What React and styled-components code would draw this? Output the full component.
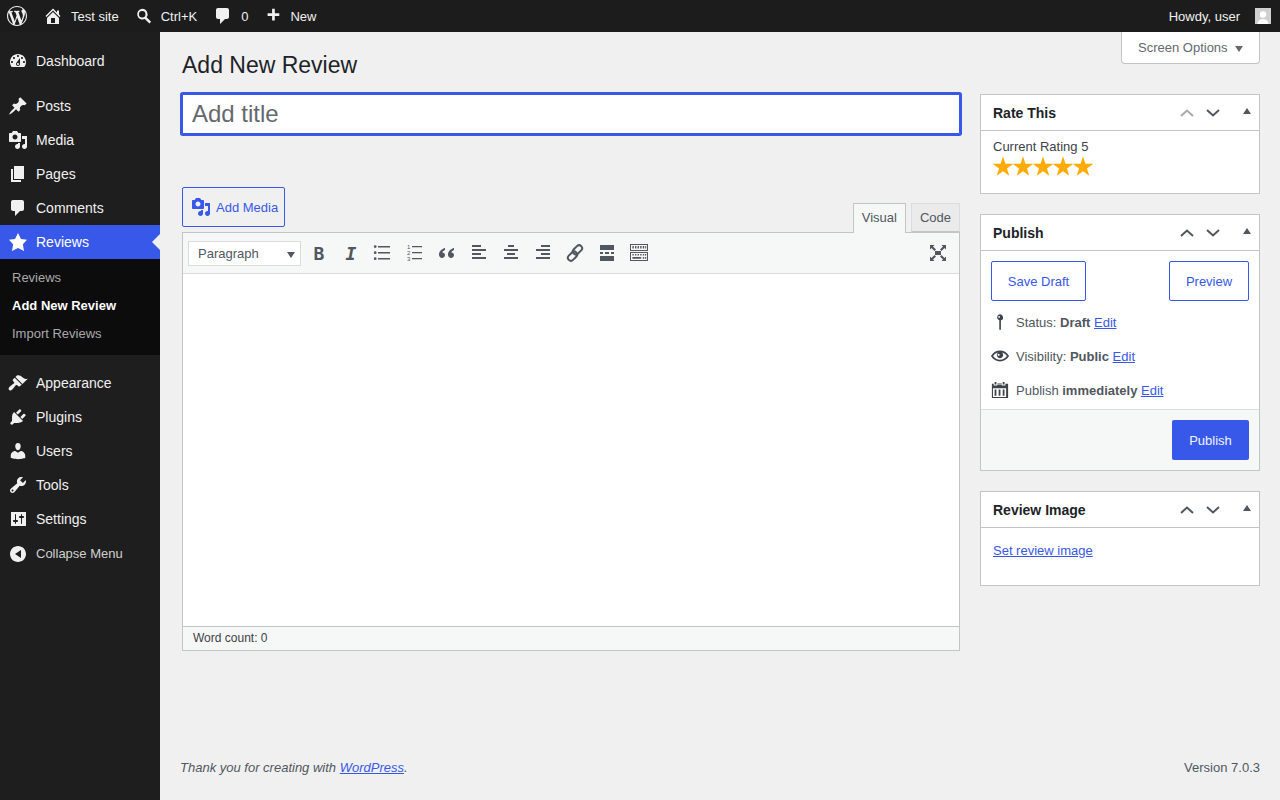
import styled, { createGlobalStyle } from 'styled-components';

const blue = '#3858e9';
const sans = '"Liberation Sans", Arial, sans-serif';

const GlobalStyle = createGlobalStyle`
    html, body {
        margin: 0;
        height: 800px;
        overflow: hidden;
        background: #f0f0f1;
        font-family: ${sans};
        font-size: 13px;
        color: #3c434a;
    }
    * { box-sizing: border-box; }
`

const paths = {
    wordpress: 'M20 10c0-5.51-4.49-10-10-10C4.48 0 0 4.49 0 10c0 5.52 4.48 10 10 10 5.51 0 10-4.48 10-10zM7.78 15.37L4.37 6.22c.55-.02 1.17-.08 1.17-.08.5-.06.44-1.13-.06-1.11 0 0-1.45.11-2.37.11-.18 0-.37 0-.58-.01C4.12 2.69 6.87 1.11 10 1.11c2.33 0 4.45.87 6.05 2.34-.68-.11-1.65.39-1.65 1.58 0 .74.45 1.36.9 2.1.35.61.55 1.36.55 2.46 0 1.49-1.4 5-1.4 5l-3.03-8.37c.54-.02.82-.17.82-.17.5-.05.44-1.25-.06-1.22 0 0-1.44.12-2.38.12-.87 0-2.33-.12-2.33-.12-.5-.03-.56 1.2-.06 1.22l.92.08 1.26 3.41zM17.41 10c.24-.64.74-1.87.43-4.25.7 1.29 1.05 2.71 1.05 4.25 0 3.29-1.73 6.24-4.4 7.78.97-2.59 1.94-5.2 2.92-7.78zM6.1 18.09C3.12 16.65 1.11 13.53 1.11 10c0-1.3.23-2.48.72-3.59C3.25 10.3 4.67 14.2 6.1 18.09zm4.03-6.63l2.58 6.98c-.86.29-1.76.45-2.71.45-.79 0-1.57-.11-2.29-.33.81-2.38 1.62-4.74 2.42-7.1z',
    home: 'M16 8.5l1.53 1.53-1.06 1.06L10 4.62l-6.47 6.47-1.06-1.06L10 2.5l4 4v-2h2v4zm-6-2.46l6 5.99V18H4v-5.97zM12 17v-5H8v5h4z',
    search: 'M8 2a6 6 0 0 1 4.9 9.46l5 5-1.9 2-5.1-5A6 6 0 1 1 8 2zm0 2.4a3.6 3.6 0 1 0 0 7.2 3.6 3.6 0 0 0 0-7.2z',
    comment: 'M5 2h9c1.1 0 2 .9 2 2v7c0 1.1-.9 2-2 2h-2l-5 5v-5H5c-1.1 0-2-.9-2-2V4c0-1.1.9-2 2-2z',
    plus: 'M17 7v3h-5v5H9v-5H4V7h5V2h3v5h5z',
    dashboard: 'M3.76 16h12.48c1.1-1.37 1.76-3.11 1.76-5 0-4.42-3.58-8-8-8s-8 3.58-8 8c0 1.89.66 3.63 1.76 5zM10 4c.55 0 1 .45 1 1s-.45 1-1 1-1-.45-1-1 .45-1 1-1zM6 6c.55 0 1 .45 1 1s-.45 1-1 1-1-.45-1-1 .45-1 1-1zm8 0c.55 0 1 .45 1 1s-.45 1-1 1-1-.45-1-1 .45-1 1-1zm-5.37 5.55L12 7v6c0 1.1-.9 2-2 2s-2-.9-2-2c0-.57.24-1.08.63-1.45zM4 10c.55 0 1 .45 1 1s-.45 1-1 1-1-.45-1-1 .45-1 1-1zm12 0c.55 0 1 .45 1 1s-.45 1-1 1-1-.45-1-1 .45-1 1-1zm-5 3c0-.55-.45-1-1-1s-1 .45-1 1 .45 1 1 1 1-.45 1-1z',
    pin: 'M10.44 3.02l1.82-1.82 6.36 6.35-1.83 1.82c-1.05-.68-2.48-.57-3.41.36l-.75.75c-.92.93-1.04 2.35-.35 3.41l-1.83 1.82-2.41-2.41-2.8 2.79c-.42.42-3.38 2.71-3.8 2.29s1.86-3.39 2.28-3.81l2.79-2.79L4.1 9.36l1.83-1.82c1.05.69 2.48.57 3.4-.36l.75-.75c.93-.92 1.05-2.35.36-3.41z',
    media: 'M13 11V4c0-.55-.45-1-1-1h-1.67L9 1H5L3.67 3H2c-.55 0-1 .45-1 1v7c0 .55.45 1 1 1h10c.55 0 1-.45 1-1zM7 4.5c1.38 0 2.5 1.12 2.5 2.5S8.38 9.5 7 9.5 4.5 8.38 4.5 7 5.62 4.5 7 4.5zM14 6h5v10.5c0 1.38-1.12 2.5-2.5 2.5S14 17.88 14 16.5s1.12-2.5 2.5-2.5c.17 0 .34.02.5.05V9h-3V6zm-4 8.05V13h2v3.5c0 1.38-1.12 2.5-2.5 2.5S7 17.88 7 16.5 8.12 14 9.5 14c.17 0 .34.02.5.05z',
    page: 'M6 15V2h10v13H6zm-1 1h8v2H3V5h2v11z',
    star: 'M10 1l3 6 6 .75-4.12 4.62L16 19l-6-3-6 3 1.13-6.63L1 7.75 7 7z',
    appearance: 'M14.48 11.06L7.41 3.99l1.5-1.5c.5-.56 2.3-.47 3.51.32 1.21.8 1.43 1.28 2.91 2.1 1.18.64 2.45 1.26 4.45.85zm-.71.71L6.7 4.7 4.93 6.47c-.39.39-.39 1.02 0 1.41l1.06 1.06c.39.39.39 1.03 0 1.42-.6.6-3.38 2.67-3.38 2.67-.35.26-.7.53-1.01.84-1.39 1.39-1.05 2.44-.61 2.88l.44.44c.44.44 1.5.78 2.89-.61.31-.31.58-.66.84-1.01 0 0 2.07-2.78 2.67-3.38.39-.39 1.03-.39 1.42 0l1.06 1.06c.39.39 1.02.39 1.41 0z',
    plugins: 'M13.11 4.36L9.87 7.6 8 5.73l3.24-3.24c.35-.34 1.05-.2 1.56.32.52.51.66 1.21.31 1.55zm-8 1.77l.91-1.12 9.01 9.01-1.19.84c-.71.71-2.63 1.16-3.82 1.16H6.14L4.9 17.26c-.59.59-1.54.59-2.12 0-.59-.58-.59-1.53 0-2.12l1.24-1.24v-3.88c0-1.13.4-3.19 1.09-3.89zm7.26 3.97l3.24-3.24c.34-.35 1.04-.21 1.55.31.52.51.66 1.21.31 1.55l-3.24 3.25z',
    users: 'M10 9.25c-2.27 0-2.73-3.44-2.73-3.44C7 4.02 7.82 2 9.97 2c2.16 0 2.98 2.02 2.71 3.81 0 0-.41 3.44-2.68 3.44zm0 2.57L12.72 10c2.39 0 4.52 2.33 4.52 4.53v2.49s-3.65 1.13-7.24 1.13c-3.65 0-7.24-1.13-7.24-1.13v-2.49c0-2.25 1.94-4.48 4.47-4.48z',
    tools: 'M16.68 9.77c-1.34 1.34-3.3 1.67-4.95.99l-5.41 6.52c-.99.99-2.59.99-3.58 0s-.99-2.59 0-3.57l6.52-5.42c-.68-1.65-.35-3.61.99-4.95 1.28-1.28 3.12-1.62 4.72-1.06l-2.89 2.89 2.82 2.82 2.86-2.87c.53 1.58.18 3.39-1.08 4.65zM3.81 16.21c.4.39 1.04.39 1.43 0 .4-.4.4-1.04 0-1.43-.39-.4-1.03-.4-1.43 0-.39.39-.39 1.03 0 1.43z',
    settings: 'M18 17V3H3v14h15zM8 11h1c.55 0 1 .45 1 1s-.45 1-1 1H8v1.5c0 .28-.22.5-.5.5s-.5-.22-.5-.5V13H6c-.55 0-1-.45-1-1s.45-1 1-1h1V5.5c0-.28.22-.5.5-.5s.5.22.5.5V11zm5-2h-1c-.55 0-1-.45-1-1s.45-1 1-1h1V5.5c0-.28.22-.5.5-.5s.5.22.5.5V7h1c.55 0 1 .45 1 1s-.45 1-1 1h-1v5.5c0 .28-.22.5-.5.5s-.5-.22-.5-.5V9z',
    collapse: 'M18 10c0-4.42-3.58-8-8-8s-8 3.58-8 8 3.58 8 8 8 8-3.58 8-8zM13 6v8l-6-4z',
    location: 'M10 1.5a3.4 3.4 0 0 1 1 6.65V18.5H9.2V8.15A3.4 3.4 0 0 1 10 1.5zM9 3.4a1 1 0 1 0 0 2 1 1 0 0 0 0-2z',
    eye: 'M19.7 9.4C17.7 6 14 3.9 10 3.9S2.3 6 .3 9.4L0 10l.3.6c2 3.4 5.7 5.5 9.7 5.5s7.7-2.1 9.7-5.5l.3-.6-.3-.6zM10 14.1c-3.1 0-6-1.6-7.7-4.1C3.6 8 5.7 6.6 8 6.1c-.9.6-1.5 1.7-1.5 2.9 0 1.9 1.6 3.5 3.5 3.5s3.5-1.6 3.5-3.5c0-1.2-.6-2.3-1.5-2.9 2.3.5 4.4 1.9 5.7 3.9-1.7 2.5-4.6 4.1-7.7 4.1zM8.5 7.5a1.2 1.2 0 1 0 0 2.4 1.2 1.2 0 0 0 0-2.4z',
    calendar: 'M4 1h2v3H4zM8.5 1h0zM13 1h2v3h-2zM7 2.5h5V4H7zM1 3h2v2h4V3h5v2h4V3h3v16H1zM2.2 8v9.8h14.6V8zM4 9.5h2v7H4zM8.5 9.5h2v7h-2zM13 9.5h2v7h-2z',
    bullist: 'M5 3h12v1.4H5zM5 9h12v1.4H5zM5 15h12v1.4H5zM2.2 2.2a1.4 1.4 0 1 1 0 2.8 1.4 1.4 0 0 1 0-2.8zM2.2 8.3a1.4 1.4 0 1 1 0 2.8 1.4 1.4 0 0 1 0-2.8zM2.2 14.3a1.4 1.4 0 1 1 0 2.8 1.4 1.4 0 0 1 0-2.8z',
    quote: 'M8 5C5 5.8 2 8.2 2 11.6 2 13.9 3.4 15 5 15c1.7 0 3-1.2 3-2.9 0-1.6-1.1-2.6-2.6-2.7C5.7 8.3 6.8 7.4 8 7zM17 5c-3 .8-6 3.2-6 6.6 0 2.3 1.4 3.4 3 3.4 1.7 0 3-1.2 3-2.9 0-1.6-1.1-2.6-2.6-2.7.3-1.1 1.4-2 2.6-2.4z',
    alignleft: 'M3 2h9v2H3zM3 6h14v2H3zM3 10h9v2H3zM3 14h14v2H3z',
    aligncenter: 'M7 2h6v2H7zM3 6h14v2H3zM6 10h8v2H6zM3 14h14v2H3z',
    alignright: 'M8 2h9v2H8zM3 6h14v2H3zM8 10h9v2H8zM3 14h14v2H3z',
    more: 'M3 2h14v5H3zM3 9h3v2H3zM8 9h4v2H8zM14 9h3v2h-3zM3 13h14v5H3z',
    kitchen: 'M1 1h18v7H1zM2 2v5h16V2zM3.4 3h1.4v2.6H3.4zM6 3h1.4v2.6H6zM8.6 3H10v2.6H8.6zM11.2 3h1.4v2.6h-1.4zM13.8 3h1.4v2.6h-1.4zM16.2 3h1v2.6h-1zM1 9h18v9H1zM2 10v7h16v-7zM3.4 11h1.4v1.6H3.4zM6 11h1.4v1.6H6zM8.6 11H10v1.6H8.6zM11.2 11h1.4v1.6h-1.4zM13.8 11h1.4v1.6h-1.4zM16 11h1.2v1.6H16zM3.4 14h8.8v1.8H3.4zM13.8 14h1.4v1.8h-1.4zM16 14h1.2v1.8H16z',
    fullscreen: 'M7 8h6v4H7zM2 2h4.5L5 3.5 8 6.5 6.5 8 3.5 5 2 6.5zM18 2v4.5L16.5 5l-3 3L12 6.5l3-3L13.5 2zM2 18v-4.5L3.5 15l3-3L8 13.5l-3 3L6.5 18zM18 18h-4.5l1.5-1.5-3-3 1.5-1.5 3 3 1.5-1.5z',
};

const Glyph = styled.svg`
    display: block;
    flex: none;
    fill: ${p => p.$color || 'currentColor'};
`

const Icon = ({ name, size = 20, color }) => (
    <Glyph viewBox="0 0 20 20" width={size} height={size} $color={color}>
        <path d={paths[name]} fillRule="evenodd" />
    </Glyph>
)

const Page = styled.div`
    width: 1280px;
    height: 800px;
    display: grid;
    grid-template-rows: 32px 1fr;
    grid-template-columns: 160px 1fr;
    overflow: hidden;
`

const TopBar = styled.header`
    grid-column: 1 / 3;
    background: #1c1c1c;
    color: #f0f0f1;
    display: flex;
    align-items: center;
    justify-content: space-between;
    padding: 0 9px 0 7px;
`

const TopGroup = styled.div`
    display: flex;
    align-items: center;
`

const TopItem = styled.span`
    display: flex;
    align-items: center;
    gap: ${p => p.$gap || 8}px;
    margin-left: ${p => p.$left || 0}px;
    white-space: nowrap;
`

const Avatar = styled.svg`
    display: block;
    margin-left: 7px;
`

const Sidebar = styled.nav`
    background: #1e1e1e;
    padding-top: 12px;
    color: #f0f0f1;
`

const MenuRow = styled.div`
    height: 34px;
    display: flex;
    align-items: center;
    gap: 8px;
    padding-left: 8px;
    font-size: 14px;
    position: relative;
    margin-top: ${p => p.$gapTop ? 11 : 0}px;
    background: ${p => p.$active ? blue : 'transparent'};
    color: ${p => p.$active ? '#fff' : '#f0f0f1'};
    svg { fill: ${p => p.$active ? '#fff' : '#f0f0f1'}; }
`

const ActiveArrow = styled.span`
    position: absolute;
    right: 0;
    top: 9px;
    border: 8px solid transparent;
    border-left-width: 0;
    border-right-color: #f0f0f1;
`

const SubMenu = styled.div`
    background: #0c0c0c;
    padding: 5px 0 7px;
`

const SubItem = styled.div`
    height: 28px;
    line-height: 28px;
    padding-left: 12px;
    color: ${p => p.$current ? '#fff' : '#a9a9aa'};
    font-weight: ${p => p.$current ? 700 : 400};
`

const CollapseRow = styled.div`
    height: 34px;
    display: flex;
    align-items: center;
    gap: 8px;
    padding-left: 8px;
    color: #d0d0d1;
    svg { fill: #f0f0f1; margin-top: 2px; }
`

const Content = styled.main`
    padding: 0 20px;
    display: flex;
    flex-direction: column;
    min-width: 0;
`

const HeadRow = styled.div`
    display: flex;
    justify-content: space-between;
    align-items: flex-start;
    height: 62px;
    padding-left: 2px;
`

const Title = styled.h1`
    margin: 18px 0 0;
    font-size: 23px;
    font-weight: 400;
    line-height: 30px;
    color: #1d2327;
`

const ScreenOptions = styled.button`
    width: 139px;
    height: 32px;
    background: #fff;
    border: 1px solid #c3c4c7;
    border-top: 0;
    border-radius: 0 0 4px 4px;
    font: 13px ${sans};
    color: #646970;
    display: flex;
    align-items: center;
    padding: 0 0 0 16px;
    gap: 7px;
`

const Caret = styled.span`
    display: block;
    border-style: solid;
    border-color: ${p => p.$color || '#646970'} transparent transparent;
    border-width: 6px 4px 0;
    margin-top: 3px;
`

const Columns = styled.div`
    display: grid;
    grid-template-columns: 778px 280px;
    column-gap: 20px;
    padding-left: 2px;
`

const TitleInput = styled.input`
    display: block;
    width: 100%;
    height: 40px;
    border: 1px solid ${blue};
    box-shadow: 0 0 0 2px ${blue};
    border-radius: 1px;
    outline: 0;
    padding: 3px 9px;
    font: 24px ${sans};
    color: #2c3338;
    &::placeholder { color: #646970; opacity: 1; }
`

const EditorHead = styled.div`
    margin-top: 53px;
    display: flex;
    justify-content: space-between;
    align-items: flex-end;
    height: 45px;
`

const AddMedia = styled.button`
    width: 103px;
    height: 40px;
    align-self: flex-start;
    background: transparent;
    border: 1px solid ${blue};
    border-radius: 2px;
    color: ${blue};
    font: 13px ${sans};
    display: flex;
    align-items: center;
    gap: 5px;
    padding: 0 0 0 8px;
`

const Tabs = styled.div`
    display: flex;
    gap: 5px;
    position: relative;
    z-index: 1;
    margin-bottom: -1px;
`

const Tab = styled.div`
    height: ${p => p.$active ? 30 : 29}px;
    line-height: 27px;
    padding: 0 8px;
    border: 1px solid ${p => p.$active ? '#c3c4c7' : '#dcdcde'};
    border-bottom: ${p => p.$active ? '0' : '1px solid #c3c4c7'};
    background: ${p => p.$active ? '#f6f7f7' : '#ebebeb'};
    color: #50575e;
`

const Editor = styled.div`
    height: 419px;
    border: 1px solid #c3c4c7;
    border-top-color: #c3c4c7;
    background: #fff;
    display: flex;
    flex-direction: column;
`

const Toolbar = styled.div`
    height: 41px;
    background: #f6f7f7;
    border-bottom: 1px solid #dcdcde;
    display: flex;
    align-items: center;
    padding: 0 5px;
`

const FormatSelect = styled.div`
    width: 113px;
    height: 25px;
    margin-right: 2px;
    border: 1px solid #dcdcde;
    background: #fff;
    color: #50575e;
    display: flex;
    align-items: center;
    justify-content: space-between;
    padding: 0 5px 0 9px;
`

const ToolButton = styled.span`
    width: 32px;
    height: 30px;
    display: flex;
    align-items: center;
    justify-content: center;
    color: #50575e;
    margin-left: ${p => p.$push ? 'auto' : '0'};
`

const ToolLetter = styled.span`
    font-family: "DejaVu Sans Mono", monospace;
    font-size: 18px;
    font-weight: 700;
    font-style: ${p => p.$italic ? 'italic' : 'normal'};
`

const EditorBody = styled.div`
    flex: 1;
`

const StatusBar = styled.div`
    height: 24px;
    line-height: 23px;
    padding-left: 10px;
    background: #f6f7f7;
    border-top: 1px solid #c3c4c7;
    font-size: 12px;
    color: #3c434a;
`

const SideColumn = styled.aside`
    display: flex;
    flex-direction: column;
    gap: 20px;
`

const Box = styled.section`
    background: #fff;
    border: 1px solid #c3c4c7;
    height: ${p => p.$height}px;
    display: flex;
    flex-direction: column;
`

const BoxHead = styled.div`
    height: 36px;
    flex: none;
    border-bottom: 1px solid #c3c4c7;
    display: flex;
    align-items: center;
    padding: 0 8px 0 12px;
`

const BoxTitle = styled.h2`
    margin: 0;
    flex: 1;
    font-size: 14px;
    font-weight: 700;
    color: #1d2327;
`

const BoxControls = styled.div`
    display: flex;
    align-items: center;
    gap: 12px;
`

const Chevron = styled.svg`
    display: block;
    fill: none;
    stroke: ${p => p.$dim ? '#a7aaad' : '#50575e'};
    stroke-width: 2;
`

const BoxToggle = styled.span`
    display: block;
    border-style: solid;
    border-color: transparent transparent #50575e;
    border-width: 0 4px 6px;
    margin: 0 0 3px 11px;
`

const RatingBody = styled.div`
    padding: 8px 12px;
    line-height: 16px;
`

const Stars = styled.div`
    display: flex;
    margin-top: 1px;
`

const StarGlyph = styled.svg`
    display: block;
    fill: #ffab00;
`

const ButtonRow = styled.div`
    display: flex;
    justify-content: space-between;
    padding: 10px 10px 0;
`

const OutlineButton = styled.button`
    width: ${p => p.$width}px;
    height: 40px;
    background: #fff;
    border: 1px solid ${blue};
    border-radius: 2px;
    color: ${blue};
    font: 13px ${sans};
`

const MiscList = styled.div`
    padding: 4px 10px 0;
    flex: 1;
`

const MiscRow = styled.div`
    height: 34px;
    display: flex;
    align-items: center;
    gap: 7px;
    color: #50575e;
    svg { fill: #3c434a; }
    span { white-space: pre; margin-top: ${p => p.$textShift || 0}px; }
    b { font-weight: 700; }
`

const TextLink = styled.a`
    color: ${blue};
    text-decoration: underline;
`

const PublishFoot = styled.div`
    height: 61px;
    background: #f6f7f7;
    border-top: 1px solid #dcdcde;
    display: flex;
    justify-content: flex-end;
    padding: 10px 10px 0;
`

const PrimaryButton = styled.button`
    width: 77px;
    height: 40px;
    background: ${blue};
    border: 0;
    border-radius: 2px;
    color: #f0f5ff;
    font: 13px ${sans};
`

const ImageBody = styled.div`
    padding: 15px 12px;
`

const Footer = styled.footer`
    margin-top: auto;
    height: 40px;
    display: flex;
    justify-content: space-between;
    color: #50575e;
    line-height: 16px;
`

const Thanks = styled.em`
    font-style: italic;
`

const menuTop = [
    { icon: 'pin', label: 'Posts', gapTop: true },
    { icon: 'media', label: 'Media' },
    { icon: 'page', label: 'Pages' },
    { icon: 'comment', label: 'Comments' },
];

const menuBottom = [
    { icon: 'appearance', label: 'Appearance', gapTop: true },
    { icon: 'plugins', label: 'Plugins' },
    { icon: 'users', label: 'Users' },
    { icon: 'tools', label: 'Tools' },
    { icon: 'settings', label: 'Settings' },
];

const toolIcons = ['bullist', 'numlist', 'quote', 'alignleft', 'aligncenter', 'alignright', 'link', 'more', 'kitchen'];

const starPoints = Array.from({ length: 10 }, (_, i) => {
    const r = i % 2 ? 4.2 : 10.6;
    const a = (Math.PI / 5) * i - Math.PI / 2;
    return `${(10 + r * Math.cos(a)).toFixed(2)},${(10.6 + r * Math.sin(a)).toFixed(2)}`;
}).join(' ');

const NumList = () => (
    <svg viewBox="0 0 20 20" width="20" height="20" fill="#50575e">
        <path d="M7 3h10v1.2H7zM7 9h10v1.2H7zM7 15h10v1.2H7z" />
        <text x="2" y="6" fontSize="6" fontFamily={sans}>1</text>
        <text x="2" y="12" fontSize="6" fontFamily={sans}>2</text>
        <text x="2" y="18" fontSize="6" fontFamily={sans}>3</text>
    </svg>
)

const LinkIcon = () => (
    <svg viewBox="0 0 20 20" width="20" height="20" fill="none" stroke="#50575e" strokeWidth="2">
        <rect x="9.5" y="1.6" width="6" height="10.5" rx="3" transform="rotate(45 12.5 6.85)" />
        <rect x="4.5" y="7.9" width="6" height="10.5" rx="3" transform="rotate(45 7.5 13.15)" />
    </svg>
)

const Chev = ({ up, dim }) => (
    <Chevron viewBox="0 0 14 8" width="14" height="8" $dim={dim}>
        <path d={up ? 'M1 7l6-5.5L13 7' : 'M1 1l6 5.5L13 1'} />
    </Chevron>
)

const MetaBox = ({ title, height, dimUp, children }) => (
    <Box $height={height}>
        <BoxHead>
            <BoxTitle>{title}</BoxTitle>
            <BoxControls>
                <Chev up dim={dimUp} />
                <Chev />
                <BoxToggle />
            </BoxControls>
        </BoxHead>
        {children}
    </Box>
)

const App = () => {
    return (
        <Page>
            <GlobalStyle />
            <TopBar>
                <TopGroup>
                    <Icon name="wordpress" />
                    <TopItem $left={16}><Icon name="home" />Test site</TopItem>
                    <TopItem $left={16}><Icon name="search" size={18} />Ctrl+K</TopItem>
                    <TopItem $left={16}><Icon name="comment" />0</TopItem>
                    <TopItem $left={16}><Icon name="plus" size={18} />New</TopItem>
                </TopGroup>
                <TopItem $gap={0}>
                    Howdy, user
                    <Avatar viewBox="0 0 16 16" width="16" height="16">
                        <rect width="16" height="16" fill="#d0d0d0" />
                        <circle cx="8" cy="6.5" r="3.2" fill="#fff" />
                        <path d="M2.5 16c.4-3.4 2.5-5 5.5-5s5.1 1.6 5.5 5z" fill="#fff" />
                    </Avatar>
                </TopItem>
            </TopBar>

            <Sidebar>
                <MenuRow><Icon name="dashboard" />Dashboard</MenuRow>
                {menuTop.map(m => (
                    <MenuRow key={m.label} $gapTop={m.gapTop}><Icon name={m.icon} />{m.label}</MenuRow>
                ))}
                <MenuRow $active><Icon name="star" />Reviews<ActiveArrow /></MenuRow>
                <SubMenu>
                    <SubItem>Reviews</SubItem>
                    <SubItem $current>Add New Review</SubItem>
                    <SubItem>Import Reviews</SubItem>
                </SubMenu>
                {menuBottom.map(m => (
                    <MenuRow key={m.label} $gapTop={m.gapTop}><Icon name={m.icon} />{m.label}</MenuRow>
                ))}
                <CollapseRow><Icon name="collapse" />Collapse Menu</CollapseRow>
            </Sidebar>

            <Content>
                <HeadRow>
                    <Title>Add New Review</Title>
                    <ScreenOptions>Screen Options<Caret /></ScreenOptions>
                </HeadRow>
                <Columns>
                    <div>
                        <TitleInput placeholder="Add title" />
                        <EditorHead>
                            <AddMedia><Icon name="media" />Add Media</AddMedia>
                            <Tabs>
                                <Tab $active>Visual</Tab>
                                <Tab>Code</Tab>
                            </Tabs>
                        </EditorHead>
                        <Editor>
                            <Toolbar>
                                <FormatSelect>Paragraph<Caret $color="#50575e" /></FormatSelect>
                                <ToolButton><ToolLetter>B</ToolLetter></ToolButton>
                                <ToolButton><ToolLetter $italic>I</ToolLetter></ToolButton>
                                {toolIcons.map(name => (
                                    <ToolButton key={name}>
                                        {name === 'numlist' ? <NumList /> : name === 'link' ? <LinkIcon /> : <Icon name={name} />}
                                    </ToolButton>
                                ))}
                                <ToolButton $push><Icon name="fullscreen" /></ToolButton>
                            </Toolbar>
                            <EditorBody />
                            <StatusBar>Word count: 0</StatusBar>
                        </Editor>
                    </div>
                    <SideColumn>
                        <MetaBox title="Rate This" height={100} dimUp>
                            <RatingBody>
                                Current Rating 5
                                <Stars>
                                    {[0, 1, 2, 3, 4].map(i => (
                                        <StarGlyph key={i} viewBox="0 0 20 20" width="20" height="21">
                                            <polygon points={starPoints} />
                                        </StarGlyph>
                                    ))}
                                </Stars>
                            </RatingBody>
                        </MetaBox>
                        <MetaBox title="Publish" height={257}>
                            <ButtonRow>
                                <OutlineButton $width={95}>Save Draft</OutlineButton>
                                <OutlineButton $width={80}>Preview</OutlineButton>
                            </ButtonRow>
                            <MiscList>
                                <MiscRow><Icon name="location" size={18} /><span>Status: <b>Draft</b> <TextLink>Edit</TextLink></span></MiscRow>
                                <MiscRow><Icon name="eye" size={18} /><span>Visibility: <b>Public</b> <TextLink>Edit</TextLink></span></MiscRow>
                                <MiscRow><Icon name="calendar" size={18} /><span>Publish <b>immediately</b> <TextLink>Edit</TextLink></span></MiscRow>
                            </MiscList>
                            <PublishFoot><PrimaryButton>Publish</PrimaryButton></PublishFoot>
                        </MetaBox>
                        <MetaBox title="Review Image" height={95}>
                            <ImageBody><TextLink>Set review image</TextLink></ImageBody>
                        </MetaBox>
                    </SideColumn>
                </Columns>
                <Footer>
                    <Thanks>Thank you for creating with <TextLink>WordPress</TextLink>.</Thanks>
                    <span>Version 7.0.3</span>
                </Footer>
            </Content>
        </Page>
    )
}

export default App;
